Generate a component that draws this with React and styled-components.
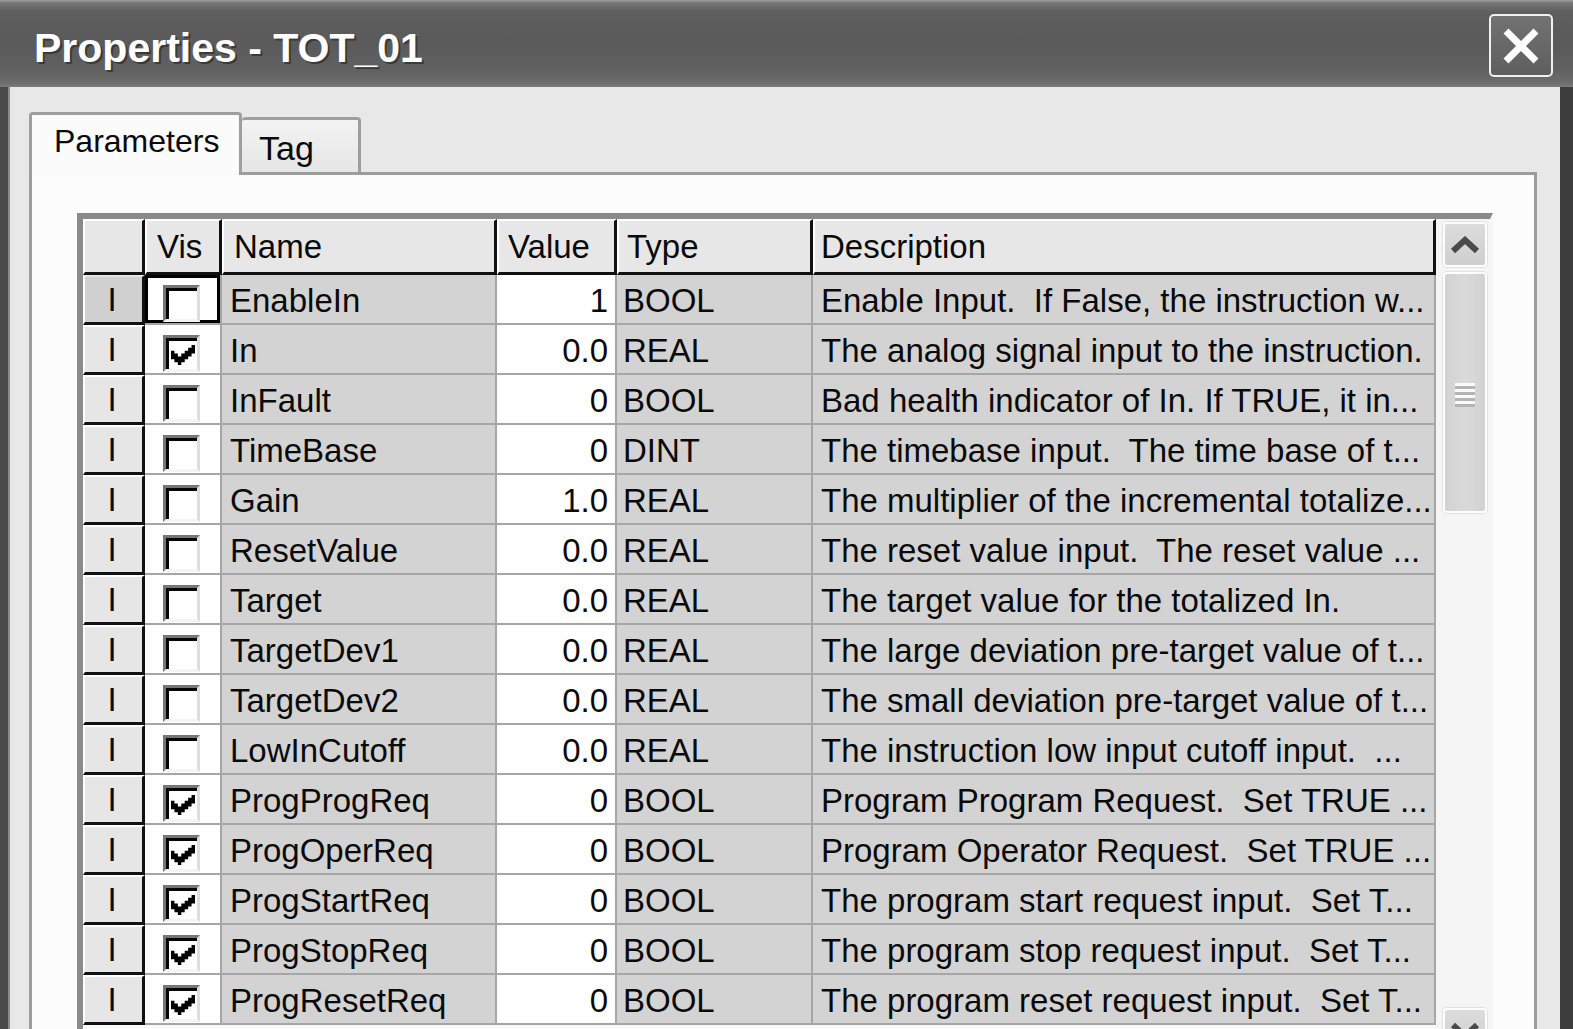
import React from 'react';
import styled, { createGlobalStyle } from 'styled-components';

const Global = createGlobalStyle`
  html, body { margin: 0; padding: 0; overflow: hidden; background: #e8e8e8; }
  body { font-family: "Liberation Sans", Arial, sans-serif; color: #0a0a0a; }
  * { box-sizing: border-box; }
`;

const COLS = '62px 77px 275px 120px 196px 623px';

const Window = styled.div`
  width: 1573px;
  height: 1029px;
  display: flex;
  flex-direction: column;
  overflow: hidden;
`;

const TitleBar = styled.div`
  height: 87px;
  flex: none;
  display: flex;
  align-items: center;
  justify-content: space-between;
  padding: 0 20px 0 34px;
  background: linear-gradient(#a0a0a0 0, #747474 3px, #5e5e5e 12px, #5a5a5a 45px, #616161 70px, #6d6d6d 83px, #7c7c7c 87px);
`;

const Title = styled.div`
  color: #ffffff;
  font-weight: bold;
  font-size: 41px;
  padding-top: 9px;
  text-shadow: 2px 2px 0 #3a3a3a;
  white-space: pre;
`;

const CloseButton = styled.div`
  width: 64px;
  height: 63px;
  margin-top: 4px;
  border: 2px solid #f0f0f0;
  border-radius: 5px;
  background: linear-gradient(#727272, #5e5e5e);
  display: flex;
  align-items: center;
  justify-content: center;
`;

const Frame = styled.div`
  flex: 1;
  min-height: 0;
  display: flex;
  flex-direction: column;
  border-left: 8px solid #4b4b4b;
  border-right: 13px solid #3d3d3d;
  box-shadow: inset 2px 0 0 #8a8a8a;
  background: #e8e8e8;
  padding: 25px 23px 0 21px;
`;

const TabStrip = styled.div`
  display: flex;
  align-items: flex-end;
  height: 63px;
  flex: none;
  margin-bottom: -3px;
  position: relative;
  z-index: 1;
`;

const Tab = styled.div`
  font-size: ${p => (p.$active ? '32px' : '34px')};
  height: ${p => (p.$active ? '63px' : '55px')};
  width: ${p => (p.$active ? '213px' : '119px')};
  margin-bottom: ${p => (p.$active ? '0' : '3px')};
  line-height: ${p => (p.$active ? '36px' : '38px')};
  padding: ${p => (p.$active ? '8px 0 0 22px' : '9px 0 0 17px')};
  border: 3px solid #9e9e9e;
  border-bottom: none;
  border-left: ${p => (p.$active ? '3px solid #9e9e9e' : 'none')};
  border-radius: 4px 4px 0 0;
  background: ${p => (p.$active ? '#fbfbfb' : 'linear-gradient(#f3f3f3, #e6e6e6)')};
`;

const Panel = styled.div`
  flex: 1;
  min-height: 0;
  border: 3px solid #9c9c9c;
  border-bottom: none;
  background: #fcfcfc;
  padding: 38px 41px 0 45px;
`;

const GridFrame = styled.div`
  display: flex;
  align-items: flex-start;
  border-top: 6px solid #8a8a8a;
  border-left: 6px solid #8a8a8a;
  border-right: 3px solid #f6f6f6;
  background: #fafafa;
`;

const Table = styled.div`
  width: 1353px;
  flex: none;
  display: flex;
  flex-direction: column;
`;

const Row = styled.div`
  display: grid;
  grid-template-columns: ${COLS};
  height: ${p => (p.$header ? '56px' : '50px')};
`;

const HeaderCell = styled.div`
  border-top: 2px solid #ffffff;
  border-left: 2px solid #ffffff;
  border-right: 3px solid #111111;
  border-bottom: 3px solid #111111;
  background: #e7e7e7;
  font-size: 33px;
  line-height: 51px;
  padding-left: ${p => p.$pad || '9px'};
  white-space: pre;
  overflow: hidden;
`;

const RowHeadCell = styled.div`
  border-top: 2px solid ${p => (p.$selected ? '#e4e4e4' : '#ffffff')};
  border-left: 2px solid #ffffff;
  border-right: 3px solid #111111;
  border-bottom: 3px solid #111111;
  background: ${p => (p.$selected ? '#d0d0d0' : '#e6e6e6')};
  font-size: 33px;
  line-height: 42px;
  padding-top: 2px;
  padding-right: 3px;
  text-align: center;
`;

const Cell = styled.div`
  border-right: 2px solid #a6a6a6;
  border-bottom: 2px solid #a6a6a6;
  background: ${p => (p.$white ? '#ffffff' : '#d3d3d3')};
  font-size: 33px;
  line-height: 44px;
  padding: 4px ${p => (p.$right ? '7px' : '0')} 0 ${p => p.$pad || '0'};
  text-align: ${p => (p.$right ? 'right' : 'left')};
  white-space: pre;
  overflow: hidden;
`;

const VisCell = styled.div`
  border-right: 2px solid #a6a6a6;
  border-bottom: 2px solid #a6a6a6;
  background: #ffffff;
  padding: 10px 0 0 18px;
  box-shadow: ${p => (p.$focused ? 'inset 0 0 0 3px #000' : 'none')};
`;

const CheckBox = styled.div`
  width: 37px;
  height: 37px;
  background: #ffffff;
  border-top: 3px solid #767676;
  border-left: 3px solid #767676;
  border-right: 3px solid #dedede;
  border-bottom: 3px solid #f4f4f4;
  box-shadow: inset 3px 3px 0 #050505;
  padding: 7px 0 0 5px;
`;

const ScrollBar = styled.div`
  width: 54px;
  height: 837px;
  flex: none;
  display: flex;
  flex-direction: column;
  gap: 5px;
  padding: 3px 3px 3px 7px;
  background: #f5f5f5;
`;

const ScrollButton = styled.div`
  height: 45px;
  flex: none;
  border: 2px solid #fdfdfd;
  border-radius: 4px;
  background: linear-gradient(#dcdcdc, #cfcfcf);
  box-shadow: 0 0 0 1px #e2e2e2;
  display: flex;
  align-items: center;
  justify-content: center;
`;

const Thumb = styled.div`
  height: 241px;
  flex: none;
  border: 2px solid #fdfdfd;
  border-radius: 4px;
  background: linear-gradient(90deg, #d2d2d2, #dadada 50%, #d2d2d2);
  box-shadow: 0 0 0 1px #e2e2e2;
  display: flex;
  align-items: center;
  justify-content: center;
`;

const Grip = styled.div`
  width: 20px;
  height: 24px;
  margin-top: 4px;
  background: repeating-linear-gradient(#fafafa 0 3px, #b4b4b4 3px 6px);
`;

const Track = styled.div`
  flex: 1;
`;

const Check = () => (
  <svg width="24" height="20" viewBox="0 0 7 7" preserveAspectRatio="none" style={{ display: 'block' }}>
    <polygon
      fill="#000"
      points="6,0 7,0 7,3 6,3 6,4 5,4 5,5 4,5 4,6 3,6 3,7 2,7 2,6 1,6 1,5 0,5 0,2 1,2 1,3 2,3 2,4 3,4 3,3 4,3 4,2 5,2 5,1 6,1"
    />
  </svg>
);

const rows = [
  ['EnableIn', '1', 'BOOL', 'Enable Input.  If False, the instruction w...', false],
  ['In', '0.0', 'REAL', 'The analog signal input to the instruction.', true],
  ['InFault', '0', 'BOOL', 'Bad health indicator of In. If TRUE, it in...', false],
  ['TimeBase', '0', 'DINT', 'The timebase input.  The time base of t...', false],
  ['Gain', '1.0', 'REAL', 'The multiplier of the incremental totalize...', false],
  ['ResetValue', '0.0', 'REAL', 'The reset value input.  The reset value ...', false],
  ['Target', '0.0', 'REAL', 'The target value for the totalized In.', false],
  ['TargetDev1', '0.0', 'REAL', 'The large deviation pre-target value of t...', false],
  ['TargetDev2', '0.0', 'REAL', 'The small deviation pre-target value of t...', false],
  ['LowInCutoff', '0.0', 'REAL', 'The instruction low input cutoff input.  ...', false],
  ['ProgProgReq', '0', 'BOOL', 'Program Program Request.  Set TRUE ...', true],
  ['ProgOperReq', '0', 'BOOL', 'Program Operator Request.  Set TRUE ...', true],
  ['ProgStartReq', '0', 'BOOL', 'The program start request input.  Set T...', true],
  ['ProgStopReq', '0', 'BOOL', 'The program stop request input.  Set T...', true],
  ['ProgResetReq', '0', 'BOOL', 'The program reset request input.  Set T...', true],
];

export default function App() {
  return (
    <Window>
      <Global />
      <TitleBar>
        <Title>Properties - TOT_01</Title>
        <CloseButton>
          <svg width="36" height="36" viewBox="0 0 36 36">
            <path d="M3 3L33 33M33 3L3 33" stroke="#ffffff" strokeWidth="7" />
          </svg>
        </CloseButton>
      </TitleBar>
      <Frame>
        <TabStrip>
          <Tab $active>Parameters</Tab>
          <Tab>Tag</Tab>
        </TabStrip>
        <Panel>
          <GridFrame>
            <Table>
              <Row $header>
                <HeaderCell />
                <HeaderCell $pad="10px">Vis</HeaderCell>
                <HeaderCell $pad="10px">Name</HeaderCell>
                <HeaderCell $pad="9px">Value</HeaderCell>
                <HeaderCell $pad="8px">Type</HeaderCell>
                <HeaderCell $pad="6px">Description</HeaderCell>
              </Row>
              {rows.map(([name, value, type, desc, vis], i) => (
                <Row key={name}>
                  <RowHeadCell $selected={i === 0}>I</RowHeadCell>
                  <VisCell $focused={i === 0}>
                    <CheckBox>{vis && <Check />}</CheckBox>
                  </VisCell>
                  <Cell $pad="8px">{name}</Cell>
                  <Cell $white $right>{value}</Cell>
                  <Cell $pad="6px">{type}</Cell>
                  <Cell $pad="8px">{desc}</Cell>
                </Row>
              ))}
            </Table>
            <ScrollBar>
              <ScrollButton>
                <svg width="30" height="18" viewBox="0 0 30 18">
                  <path d="M3 15L15 4L27 15" fill="none" stroke="#4a4a4a" strokeWidth="6" />
                </svg>
              </ScrollButton>
              <Thumb>
                <Grip />
              </Thumb>
              <Track />
              <ScrollButton>
                <svg width="30" height="18" viewBox="0 0 30 18">
                  <path d="M3 3L15 14L27 3" fill="none" stroke="#4a4a4a" strokeWidth="6" />
                </svg>
              </ScrollButton>
            </ScrollBar>
          </GridFrame>
        </Panel>
      </Frame>
    </Window>
  );
}
